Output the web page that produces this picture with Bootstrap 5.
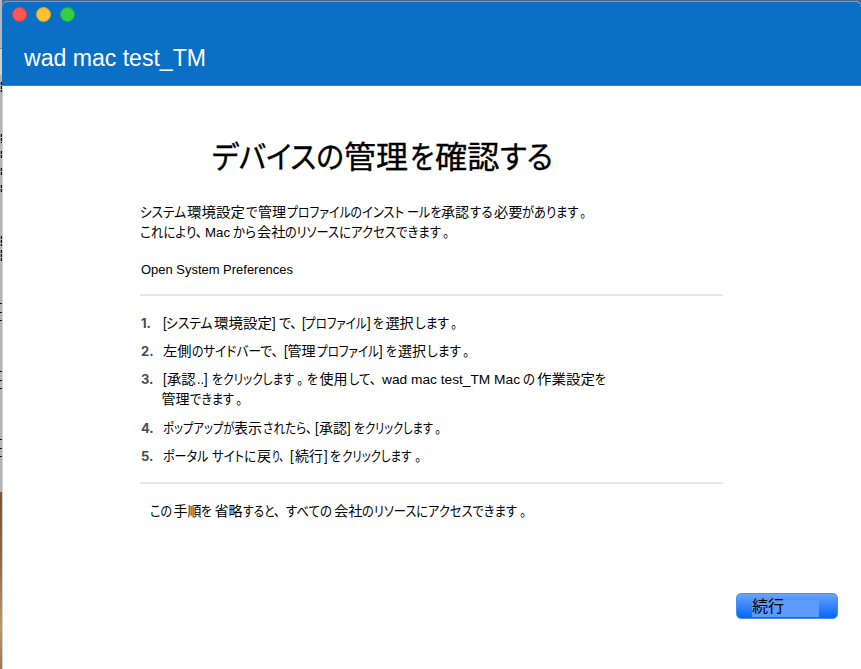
<!DOCTYPE html>
<html lang="ja">
<head>
<meta charset="utf-8">
<title>wad mac test_TM</title>
<link href="https://cdn.jsdelivr.net/npm/bootstrap@5.3.0/dist/css/bootstrap.min.css" rel="stylesheet">
<style>
html,body{height:669px;overflow:hidden}
body{background:#53648a;font-family:"Liberation Sans","Noto Sans CJK JP",sans-serif;color:#000;line-height:20px;font-size:14px}
.backdrop{width:2px;height:669px;background:linear-gradient(#b4b6b9 0 48px,#888 48px 49px,#d2d2ce 49px 75px,#b5b5b5 75px 492px,#7b5432 492px,#8c6537 550px,#b79a62 625px,#a07a48 669px)}
.backdrop svg{display:block}
.app-window{height:668px;margin-top:1px;background:#fff;border-radius:6px 6px 0 0;border-left:1px solid #d0d0d0}
.title-area{height:85px;margin-left:-1px;background:#0b6fc6;border-top:1px solid #5f9fdc;border-bottom:1px solid #3585d5;border-radius:6px 6px 0 0;padding:5px 0 0 10px}
.lights{gap:10px}
.light{width:15px;height:15px;border-radius:50%;border:1px solid}
.light+.light{margin-left:-1px}
.light-close{background:#ff5655;border-color:#d8414b}
.light-min{background:#ffc130;border-color:#d9a62f}
.light-zoom{background:#36cf43;border-color:#23ad4a}
.app-name{font-size:23px;line-height:26px;color:#fff;margin:23px 0 0 12px}
.content{padding:50px 0 0 138px}
h1.page-title{font-size:31px;line-height:44px;height:44px;font-weight:400;margin-bottom:22px;-webkit-text-stroke:.35px #000}
.line{display:block;height:20px;white-space:nowrap}
.line>span,.page-title>span,.btn>span{display:inline-block;white-space:pre;transform-origin:0 50%;font-feature-settings:"palt"}
.lat{font-size:13px}
.prefs{margin-top:18px;margin-bottom:14px}
.rule{width:583px;height:2px;margin-left:-1px;background:#e7e7e7}
.steps{gap:8px;margin:17px 0 16px}
.steps .line+.line{margin-bottom:1px}
.num{width:0;font:bold 13px/20px Inter,sans-serif;color:#4c4c4c}
.skip{margin-top:17px}
.btn.go{width:102px;height:26px;padding:4px 0 0 15px;border:1px solid #4b8df5;border-radius:5px;background:linear-gradient(#69a5fa,#3b86fb 45%,#0567ff);margin:72px 0 0 595px}
.go-label{width:67px;height:17px;background:#5c9bfd;font-size:16px;line-height:13px;text-align:left;color:#000}
</style>
<script src="https://cdn.jsdelivr.net/npm/bootstrap@5.3.0/dist/js/bootstrap.bundle.min.js"></script>
</head>
<body>
<div class="d-flex">
<div class="backdrop flex-shrink-0"><svg width="2" height="480" stroke="#111"><path d="M1.500 82v10M1.500 134v9M1.500 151v8M1.500 168v8M1.500 185v8M1.500 236v10M1.500 250v12" stroke-width="1.500" stroke-dasharray="3 1"/><path d="M0 303.500h2M0 312.500h2M0 320.500h2M0 371.500h2M0 380.500h2M0 388.500h2M0 439.500h2M0 448.500h2M0 456.500h2"/></svg></div>
<main class="app-window flex-grow-1">
<header class="title-area">
<div class="lights d-flex"><i class="light light-close"></i><i class="light light-min"></i><i class="light light-zoom"></i></div>
<div class="app-name"><span data-s="24 182">wad mac test_TM</span></div>
</header>
<section class="content">
<h1 class="page-title"><span data-s="211.5 132">デバイスの</span><span data-s="344 64">管理</span><span data-s="409.5 24">を</span><span data-s="434.500 64.500">確認</span><span data-s="500 53">する</span></h1>
<div class="line"><span data-s="140 46">システム</span><span data-s="187 58">環境設定</span><span data-s="246 11.500">で</span><span data-s="258 28">管理</span><span data-s="286.500 75">プロファイルの</span><span data-s="362 42">インスト</span><span data-s="406.500 34.500">ールを</span><span data-s="441 28">承認</span><span data-s="469.500 22.500">する</span><span data-s="493.500 28.500">必要</span><span data-s="522 56.500">があります</span><span data-s="579.500 6">。</span></div>
<div class="line"><span data-s="140 62">これにより、</span><span class="lat" data-s="205 25">Mac</span><span data-s="233 23">から</span><span data-s="256.500 28.500">会社</span><span data-s="285 54">のリソース</span><span data-s="339 102">にアクセスできます</span><span data-s="443 6">。</span></div>
<div class="line prefs h-auto lat"><span data-s="141 152">Open System Preferences</span></div>
<div class="rule"></div>
<div class="steps d-flex flex-column">
<div class="d-flex"><b class="num">1.</b><div class="line"><span data-s="163 3.600">[</span><span data-s="166 46.500">システム</span><span data-s="213.500 58">環境設定</span><span data-s="272 3.600">]</span><span data-s="278.500 18">で、</span><span data-s="301.500 3.600">[</span><span data-s="305 61.500">プロファイル</span><span data-s="367 3.600">]</span><span data-s="373 11">を</span><span data-s="385.500 28">選択</span><span data-s="414.500 34">します</span><span data-s="451 6">。</span></div></div>
<div class="d-flex"><b class="num">2.</b><div class="line"><span data-s="163 28.500">左側</span><span data-s="191.500 11.500">の</span><span data-s="203 75">サイドバーで、</span><span data-s="284 3.600">[</span><span data-s="287.500 28">管理</span><span data-s="316.500 62">プロファイル</span><span data-s="379 3.600">]</span><span data-s="386 11">を</span><span data-s="398 28">選択</span><span data-s="427 34">します</span><span data-s="463 6">。</span></div></div>
<div class="d-flex"><b class="num">3.</b><div><div class="line"><span data-s="163 3.600">[</span><span data-s="167 28.500">承認</span><span data-s="197 7">..</span><span data-s="204 3.600">]</span><span data-s="211.500 11">を</span><span data-s="223 71">クリックします</span><span data-s="296.500 6">。</span><span data-s="306.500 11">を</span><span data-s="319.500 28">使用</span><span data-s="348.500 27">して、</span><span class="lat" data-s="382 138">wad mac test_TM Mac</span><span data-s="522.500 12">の</span><span data-s="537 58">作業設定</span><span data-s="595 11">を</span></div>
<div class="line"><span data-s="161.500 28">管理</span><span data-s="190 44">できます</span><span data-s="236 6">。</span></div></div></div>
<div class="d-flex"><b class="num">4.</b><div class="line"><span data-s="162.500 71.500">ポップアップが</span><span data-s="234 28">表示</span><span data-s="262.500 49">されたら、</span><span data-s="315 3.600">[</span><span data-s="319 28">承認</span><span data-s="347 3.600">]</span><span data-s="353.500 11">を</span><span data-s="365 68">クリックします</span><span data-s="435 6">。</span></div></div>
<div class="d-flex"><b class="num">5.</b><div class="line"><span data-s="162.500 45.500">ポータル</span><span data-s="211.500 44">サイトに</span><span data-s="257 14">戻</span><span data-s="271.500 12">り、</span><span data-s="290 3.600">[</span><span data-s="295 28">続行</span><span data-s="323.500 3.600">]</span><span data-s="329.500 11">を</span><span data-s="342 69.500">クリックします</span><span data-s="415 6">。</span></div></div>
</div>
<div class="rule"></div>
<div class="line skip"><span data-s="150 22">この</span><span data-s="173.500 28">手順</span><span data-s="201 11">を</span><span data-s="214.500 28">省略</span><span data-s="243 37">すると、</span><span data-s="286 46">すべての</span><span data-s="333.500 28.500">会社</span><span data-s="362 66">のリソースに</span><span data-s="428 89">アクセスできます</span><span data-s="520 6">。</span></div>
<button class="btn go d-block"><div class="go-label"><span data-s="752 32">続行</span></div></button>
</section>
</main>
</div>
<script>
// Squeeze every run of text to its own start and width: data-s="start width".
document.fonts.ready.then(function(){
  var rows=new Set();
  document.querySelectorAll('[data-s]').forEach(function(s){s.style.display='inline-block';s.style.transformOrigin='0 50%';rows.add(s.parentNode)});
  rows.forEach(function(row){
    var end=row.getBoundingClientRect().left;
    row.querySelectorAll('[data-s]').forEach(function(s){
      var v=s.dataset.s.split(' ').map(Number),n=s.getBoundingClientRect().width;
      s.style.marginLeft=(v[0]-end)+'px';
      s.style.marginRight=(v[1]-n)+'px';
      s.style.transform='scaleX('+v[1]/n+')';
      end=v[0]+v[1];
    });
  });
});
</script>
</body>
</html>
